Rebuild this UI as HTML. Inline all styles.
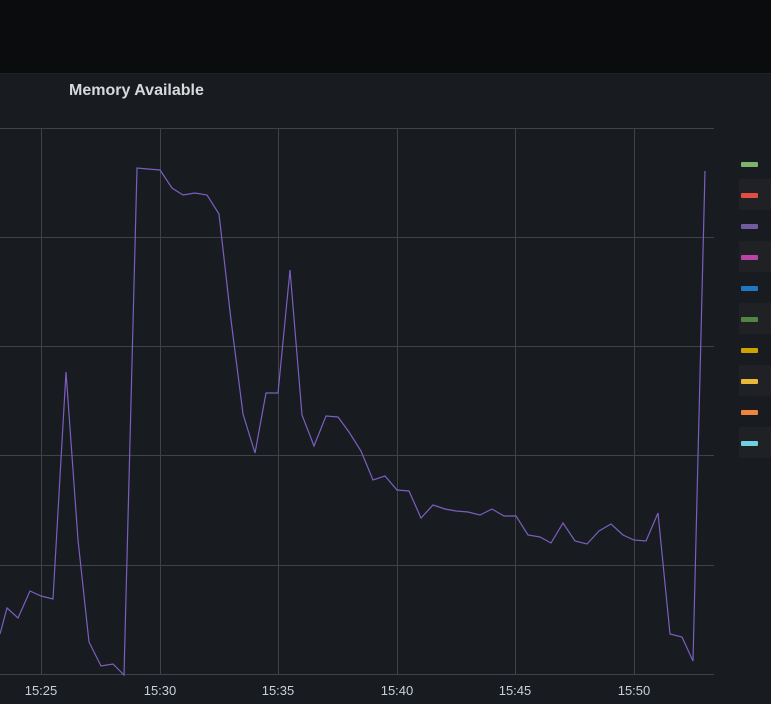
<!DOCTYPE html><html><head><style>
body{margin:0;width:771px;height:704px;background:#181b1f;overflow:hidden;font-family:"Liberation Sans",sans-serif;position:relative}
.top{position:absolute;left:0;top:0;width:771px;height:73px;background:#0b0c0e;border-bottom:1px solid #202226}
.title{position:absolute;left:69px;top:82px;color:#d8d9da;font-size:16px;font-weight:bold}
.lab{position:absolute;top:683px;color:#c7d0d9;font-size:13px;width:60px;text-align:center}
.row{position:absolute;left:739px;width:32px;height:31px}
.row.a{background:#1f2125}
.sw{position:absolute;left:2px;top:14px;width:17px;height:5px;border-radius:1px}
</style></head><body>
<div class="top"></div>
<div class="title">Memory Available</div>
<svg width="771" height="704" style="position:absolute;left:0;top:0">
<g stroke="#404246" stroke-width="1">
<line x1="0" y1="128.5" x2="714" y2="128.5"/><line x1="0" y1="237.5" x2="714" y2="237.5"/><line x1="0" y1="346.5" x2="714" y2="346.5"/><line x1="0" y1="455.5" x2="714" y2="455.5"/><line x1="0" y1="565.5" x2="714" y2="565.5"/><line x1="0" y1="674.5" x2="714" y2="674.5"/>
<line x1="41.5" y1="128" x2="41.5" y2="674"/><line x1="160.5" y1="128" x2="160.5" y2="674"/><line x1="278.5" y1="128" x2="278.5" y2="674"/><line x1="397.5" y1="128" x2="397.5" y2="674"/><line x1="515.5" y1="128" x2="515.5" y2="674"/><line x1="634.5" y1="128" x2="634.5" y2="674"/>
</g>
<polyline fill="none" stroke="#7b5fc0" stroke-width="1.2" points="0,634 7,608 18,618 30,591 41,596 53,599 66,372 78,540 89,642 101,666 113,664 124,675 137,168 148,169 160,170 172,188 183,195 195,193 207,195 219,214 231,320 243,414 255,453 266,393 278,393 290,270 302,415 314,446 326,416 338,417 349,432 361,451 373,480 385,476 397,490 409,491 421,518 433,505 445,509 456,511 468,512 480,515 492,509 504,516 516,516 528,535 540,537 551,543 563,523 575,541 587,544 599,531 611,524 623,535 634,540 646,541 658,513 670,634 682,637 693,661 705,171"/>
</svg>
<div class="lab" style="left:11px">15:25</div><div class="lab" style="left:130px">15:30</div><div class="lab" style="left:248px">15:35</div><div class="lab" style="left:367px">15:40</div><div class="lab" style="left:485px">15:45</div><div class="lab" style="left:604px">15:50</div>
<div class="row" style="top:148px"><div class="sw" style="background:#7eb26d"></div></div>
<div class="row a" style="top:179px"><div class="sw" style="background:#e24d42"></div></div>
<div class="row" style="top:210px"><div class="sw" style="background:#705da0"></div></div>
<div class="row a" style="top:241px"><div class="sw" style="background:#ba43a9"></div></div>
<div class="row" style="top:272px"><div class="sw" style="background:#1f78c1"></div></div>
<div class="row a" style="top:303px"><div class="sw" style="background:#508642"></div></div>
<div class="row" style="top:334px"><div class="sw" style="background:#cca300"></div></div>
<div class="row a" style="top:365px"><div class="sw" style="background:#eab839"></div></div>
<div class="row" style="top:396px"><div class="sw" style="background:#ef843c"></div></div>
<div class="row a" style="top:427px"><div class="sw" style="background:#6ed0e0"></div></div>
</body></html>
